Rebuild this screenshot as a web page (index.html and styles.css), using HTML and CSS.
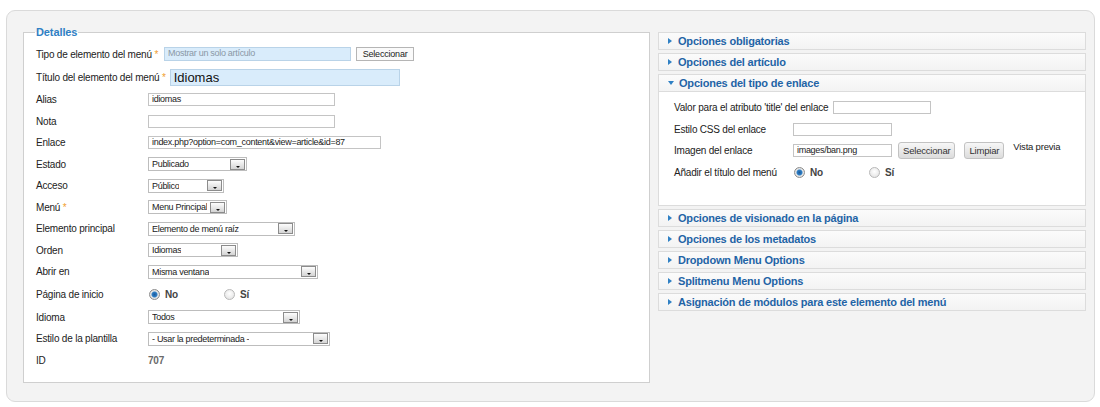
FILE: index.html
```html
<!DOCTYPE html>
<html lang="es">
<head>
    <meta charset="UTF-8">
    <title>Editar elemento del menú</title>
    <link rel="stylesheet" href="styles.css">
</head>
<body>
    <div class="panel">
        <fieldset class="detalles">
            <legend>Detalles</legend>

            <div class="row row-tipo">
                <label>Tipo de elemento del menú <span class="star">*</span></label>
                <span class="field field-blue w-tipo placeholder">Mostrar un solo artículo</span>
                <span class="btn-flat">Seleccionar</span>
            </div>

            <div class="row row-titulo">
                <label>Título del elemento del menú <span class="star">*</span></label>
                <span class="field field-blue field-big">Idiomas</span>
            </div>

            <div class="row">
                <label class="lbl">Alias</label>
                <span class="field" style="width:187px">idiomas</span>
            </div>
            <div class="row">
                <label class="lbl">Nota</label>
                <span class="field" style="width:187px"></span>
            </div>
            <div class="row">
                <label class="lbl">Enlace</label>
                <span class="field" style="width:233px">index.php?option=com_content&amp;view=article&amp;id=87</span>
            </div>
            <div class="row">
                <label class="lbl">Estado</label>
                <span class="select" style="width:99px"><span class="val">Publicado</span><span class="arrow"></span></span>
            </div>
            <div class="row">
                <label class="lbl">Acceso</label>
                <span class="select" style="width:76px"><span class="val">Público</span><span class="arrow"></span></span>
            </div>
            <div class="row">
                <label class="lbl">Menú <span class="star">*</span></label>
                <span class="select" style="width:79px"><span class="val">Menu Principal</span><span class="arrow"></span></span>
            </div>
            <div class="row">
                <label class="lbl">Elemento principal</label>
                <span class="select" style="width:147px"><span class="val">Elemento de menú raíz</span><span class="arrow"></span></span>
            </div>
            <div class="row">
                <label class="lbl">Orden</label>
                <span class="select" style="width:90px"><span class="val">Idiomas</span><span class="arrow"></span></span>
            </div>
            <div class="row">
                <label class="lbl">Abrir en</label>
                <span class="select" style="width:170px"><span class="val">Misma ventana</span><span class="arrow"></span></span>
            </div>
            <div class="row row-radio">
                <label class="lbl">Página de inicio</label>
                <span class="radio checked"></span><span class="radio-txt">No</span>
                <span class="radio"></span><span class="radio-txt">Sí</span>
            </div>
            <div class="row">
                <label class="lbl">Idioma</label>
                <span class="select" style="width:152px"><span class="val">Todos</span><span class="arrow"></span></span>
            </div>
            <div class="row">
                <label class="lbl">Estilo de la plantilla</label>
                <span class="select" style="width:182px"><span class="val">- Usar la predeterminada -</span><span class="arrow"></span></span>
            </div>
            <div class="row">
                <label class="lbl">ID</label>
                <span class="id-val">707</span>
            </div>
        </fieldset>

        <div class="sliders">
            <div class="slide"><h3 class="slide-head"><span class="tri"></span>Opciones obligatorias</h3></div>
            <div class="slide"><h3 class="slide-head"><span class="tri"></span>Opciones del artículo</h3></div>
            <div class="slide open">
                <h3 class="slide-head"><span class="tri down"></span>Opciones del tipo de enlace</h3>
                <div class="slide-body">
                    <div class="opt-row">
                        <label class="opt-auto">Valor para el atributo 'title' del enlace</label>
                        <span class="field" style="width:98px"></span>
                    </div>
                    <div class="opt-row">
                        <label class="opt-lbl">Estilo CSS del enlace</label>
                        <span class="field" style="width:99px"></span>
                    </div>
                    <div class="opt-row">
                        <label class="opt-lbl">Imagen del enlace</label>
                        <span class="field" style="width:99px">images/ban.png</span>
                        <span class="btn-round">Seleccionar</span>
                        <span class="btn-round">Limpiar</span>
                        <span class="preview">Vista previa</span>
                    </div>
                    <div class="opt-row">
                        <label class="opt-lbl">Añadir el título del menú</label>
                        <span class="radio checked"></span><span class="radio-txt">No</span>
                        <span class="radio"></span><span class="radio-txt">Sí</span>
                    </div>
                </div>
            </div>
            <div class="slide"><h3 class="slide-head"><span class="tri"></span>Opciones de visionado en la página</h3></div>
            <div class="slide"><h3 class="slide-head"><span class="tri"></span>Opciones de los metadatos</h3></div>
            <div class="slide"><h3 class="slide-head"><span class="tri"></span>Dropdown Menu Options</h3></div>
            <div class="slide"><h3 class="slide-head"><span class="tri"></span>Splitmenu Menu Options</h3></div>
            <div class="slide"><h3 class="slide-head"><span class="tri"></span>Asignación de módulos para este elemento del menú</h3></div>
        </div>
    </div>
</body>
</html>
```

FILE: styles.css
```css
* {
    box-sizing: border-box;
}
body {
    margin: 0;
    padding: 10px 5px 5px 6px;
    background: #fff;
    font-family: "Liberation Sans", Arial, sans-serif;
    font-size: 10px;
    letter-spacing: -0.2px;
    color: #222;
}
.panel {
    display: flex;
    align-items: flex-start;
    width: 1089px;
    height: 392px;
    padding: 14px 8px 0 16px;
    background: #f3f3f3;
    border: 1px solid #dadada;
    border-radius: 9px;
}
.detalles {
    width: 627px;
    height: 358px;
    margin: 0;
    padding: 4px 11px 0;
    background: #fff;
    border: 1px solid #cfcfcf;
}
.detalles legend {
    padding: 0 1px;
    font-size: 11px;
    font-weight: bold;
    letter-spacing: -0.1px;
    color: #2f80c4;
    line-height: 14px;
}
.row {
    display: flex;
    align-items: center;
    height: 21.5px;
    padding-left: 1px;
}
.row-tipo {
    height: 22px;
}
.row-titulo {
    height: 24px;
}
.row-radio {
    height: 24px;
}
.lbl {
    width: 112px;
    flex: none;
}
.star {
    color: #f0a030;
}
.field {
    display: inline-block;
    height: 13px;
    padding: 0 3px;
    background: #fff;
    border: 1px solid #c4c4c4;
    font-size: 9px;
    letter-spacing: -0.3px;
    line-height: 11px;
    white-space: nowrap;
    overflow: hidden;
}
.field-blue {
    background: #d9ecfb;
    border-color: #b9d3e8;
}
.w-tipo {
    width: 187px;
    height: 14px;
    margin-left: 6px;
}
.placeholder {
    color: #8a98a6;
}
.field-big {
    width: 230px;
    height: 17px;
    margin-left: 4px;
    font-size: 13px;
    letter-spacing: 0;
    line-height: 15px;
    color: #111;
}
.btn-flat {
    display: inline-block;
    width: 58px;
    height: 14px;
    margin-left: 5px;
    background: #fafafa;
    border: 1px solid #b5b5b5;
    font-size: 9px;
    letter-spacing: -0.2px;
    line-height: 12px;
    text-align: center;
}
.select {
    display: inline-flex;
    align-items: center;
    justify-content: space-between;
    height: 14px;
    padding: 0 1px 0 3px;
    background: #fff;
    border: 1px solid #bdbdbd;
    font-size: 9px;
    letter-spacing: -0.3px;
}
.select .val {
    white-space: nowrap;
    overflow: hidden;
}
.arrow {
    position: relative;
    flex: none;
    width: 15px;
    height: 11px;
    margin-left: 1px;
    background: linear-gradient(#fdfdfd, #d4d4d4);
    border: 1px solid #8c8c8c;
}
.arrow::after {
    content: "";
    position: absolute;
    left: 5px;
    bottom: 1px;
    border-left: 2px solid transparent;
    border-right: 2px solid transparent;
    border-top: 2px solid #111;
}
.radio {
    display: inline-block;
    flex: none;
    width: 11px;
    height: 11px;
    margin-left: 1px;
    border-radius: 50%;
    border: 1px solid #b8b8b8;
    background: radial-gradient(circle at 50% 40%, #fff, #dedede);
}
.radio.checked {
    border-color: #8d8d8d;
    background: radial-gradient(circle, #1b5a9c 0, #2f7fc5 2.5px, #e9e9e9 3.5px, #cfcfcf 6px);
}
.radio-txt {
    width: 58px;
    margin-left: 5px;
    font-weight: bold;
    color: #444;
}
.id-val {
    font-weight: bold;
    color: #6a6a6a;
}
.sliders {
    width: 428px;
    margin-left: 8px;
    margin-top: 7px;
}
.slide {
    margin-bottom: 3px;
    background: #fff;
    border: 1px solid #dcdcdc;
}
.slide-head {
    display: flex;
    align-items: center;
    height: 16px;
    margin: 0;
    padding-left: 9px;
    background: linear-gradient(#fbfbfb, #f3f3f3);
    font-size: 11px;
    font-weight: bold;
    letter-spacing: -0.2px;
    color: #1f64a6;
}
.open .slide-head {
    border-bottom: 1px solid #dcdcdc;
    height: 17px;
}
.tri {
    width: 0;
    height: 0;
    margin-right: 6px;
    border-top: 3px solid transparent;
    border-bottom: 3px solid transparent;
    border-left: 4px solid #2f80c4;
}
.tri.down {
    margin-right: 5px;
    border-left: 3px solid transparent;
    border-right: 3px solid transparent;
    border-top: 4px solid #2f80c4;
    border-bottom: 0;
}
.slide-body {
    height: 113px;
    padding: 5px 15px 0;
}
.opt-row {
    display: flex;
    align-items: center;
    height: 21.5px;
}
.opt-auto {
    margin-right: 5px;
}
.opt-lbl {
    width: 119px;
    flex: none;
}
.btn-round {
    display: inline-block;
    height: 17px;
    margin-left: 6px;
    padding: 0 4px;
    background: linear-gradient(#f7f7f7, #dcdcdc);
    border: 1px solid #c2c2c2;
    border-radius: 3px;
    font-size: 9.5px;
    line-height: 15px;
    color: #333;
}
.btn-round + .btn-round {
    margin-left: 9px;
}
.preview {
    margin-left: 9px;
    margin-top: -8px;
    font-size: 9.5px;
}
```
